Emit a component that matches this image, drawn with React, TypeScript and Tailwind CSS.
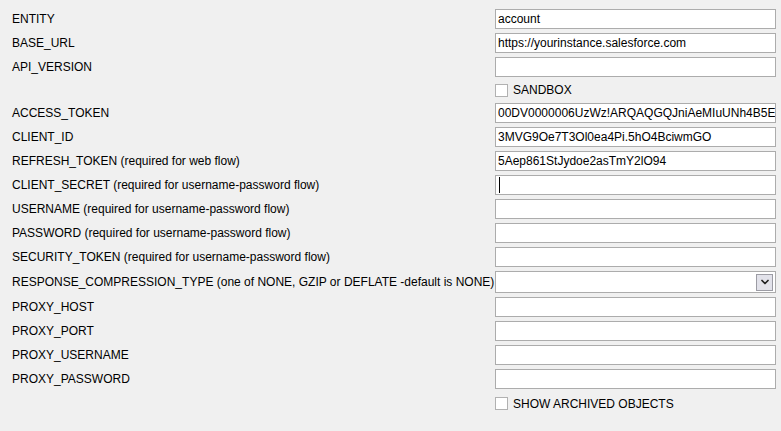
import { ChevronDown } from 'lucide-react';

type Row =
  | { kind: 'text'; label: string; value?: string; caret?: boolean }
  | { kind: 'check'; label: string; tall?: boolean }
  | { kind: 'combo'; label: string };

const rows: Row[] = [
  { kind: 'text', label: 'ENTITY', value: 'account' },
  { kind: 'text', label: 'BASE_URL', value: 'https://yourinstance.salesforce.com' },
  { kind: 'text', label: 'API_VERSION' },
  { kind: 'check', label: 'SANDBOX' },
  { kind: 'text', label: 'ACCESS_TOKEN', value: '00DV0000006UzWz!ARQAQGQJniAeMIuUNh4B5E' },
  { kind: 'text', label: 'CLIENT_ID', value: '3MVG9Oe7T3Ol0ea4Pi.5hO4BciwmGO' },
  { kind: 'text', label: 'REFRESH_TOKEN (required for web flow)', value: '5Aep861StJydoe2asTmY2lO94' },
  { kind: 'text', label: 'CLIENT_SECRET (required for username-password flow)', caret: true },
  { kind: 'text', label: 'USERNAME (required for username-password flow)' },
  { kind: 'text', label: 'PASSWORD (required for username-password flow)' },
  { kind: 'text', label: 'SECURITY_TOKEN (required for username-password flow)' },
  { kind: 'combo', label: 'RESPONSE_COMPRESSION_TYPE (one of NONE, GZIP or DEFLATE -default is NONE)' },
  { kind: 'text', label: 'PROXY_HOST' },
  { kind: 'text', label: 'PROXY_PORT' },
  { kind: 'text', label: 'PROXY_USERNAME' },
  { kind: 'text', label: 'PROXY_PASSWORD' },
  { kind: 'check', label: 'SHOW ARCHIVED OBJECTS', tall: true },
];

function CheckBox({ label, tall }: { label: string; tall?: boolean }) {
  return (
    <div className={`flex items-center gap-[5px] ${tall ? 'h-[21px]' : 'h-[18px]'}`}>
      <div className="w-[13px] h-[13px] bg-white border border-[#b1b1b1]" />
      <span>{label}</span>
    </div>
  );
}

export default function App() {
  return (
    <div
      className="w-[781px] h-[431px] bg-[#f0f0f0] text-[12px] text-black overflow-hidden"
      style={{ fontFamily: '"Liberation Sans", Arial, sans-serif' }}
    >
      <div className="grid grid-cols-[483px_281px] gap-y-1 pl-3 pt-[9px]">
        {rows.map((row, i) => (
          <div key={i} className="contents">
            {/* Label column */}
            <div className="flex items-center whitespace-nowrap">
              {row.kind !== 'check' && row.label}
            </div>

            {/* Field column */}
            {row.kind === 'text' && (
              <div className="h-5 bg-white border border-[#acacac] flex items-center pl-[2px] whitespace-nowrap overflow-hidden">
                {row.caret && <span className="w-px h-[16px] bg-black ml-px" />}
                {row.value}
              </div>
            )}
            {row.kind === 'combo' && (
              <div className="h-[22px] bg-white border border-[#acacac] flex items-center justify-end pr-[2px]">
                <div className="w-[17px] h-[17px] bg-[#e2e2ea] border border-[#9c9ca4] flex items-center justify-center">
                  <ChevronDown className="w-3 h-3 text-[#222]" strokeWidth={3.5} />
                </div>
              </div>
            )}
            {row.kind === 'check' && <CheckBox label={row.label} tall={row.tall} />}
          </div>
        ))}
      </div>
    </div>
  );
}
